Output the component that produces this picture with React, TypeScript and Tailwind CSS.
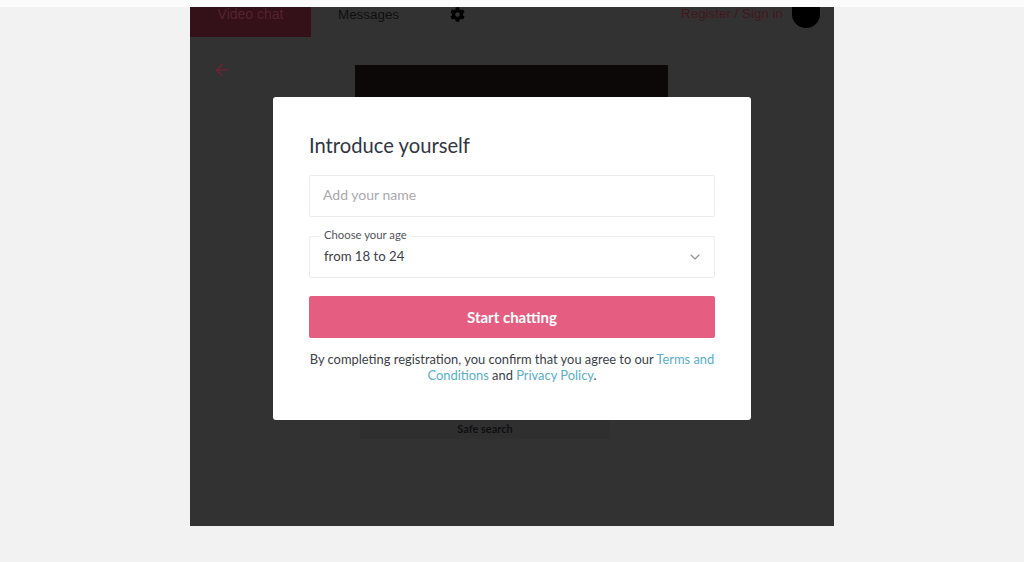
import React from 'react';
import { ArrowLeft, ChevronDown } from 'lucide-react';
import { FaCog } from 'react-icons/fa';

const App: React.FC = () => {
  return (
    <div className="w-[1024px] h-[562px] overflow-hidden flex flex-col bg-[#f2f2f2] font-['Lato','Liberation_Sans',sans-serif]">
      <div className="h-[7px] bg-[#fbfbfb] shrink-0" />

      <div className="flex-1 flex justify-center">
        {/* Dimmed page behind the dialog */}
        <div className="relative w-[644px] h-[519px] bg-[#323232] flex flex-col">
          <header className="h-[30px] flex items-start text-[13.4px] font-['Liberation_Sans',sans-serif]">
            <div className="w-[121px] h-[30px] bg-[#341018] text-[#55242d] text-[14px] flex justify-center leading-[14px]">
              Video chat
            </div>
            <div className="ml-[27px] text-[#0f0f10] leading-[15px]">Messages</div>
            <FaCog className="ml-[51px] w-[15px] h-[15px] text-black" />
            <div className="ml-auto text-[#45161f] leading-[14px]">Register / Sign in</div>
            <div className="ml-[9px] mr-[14px] w-[28px] h-[21px] bg-black rounded-b-[14px]" />
          </header>

          <div className="flex items-start pt-[28px]">
            <ArrowLeft className="-mt-[4px] ml-[23px] w-[18px] h-[18px] text-[#6b2433]" strokeWidth={2} />
            <div className="ml-[124px] w-[313px] h-[120px] bg-[#0b0807]" />
          </div>

          <div className="mt-auto mb-[87px] ml-[170px] w-[250px] h-[20px] bg-[#2f2f30] flex items-center justify-center text-[11px] font-bold text-[#0f0f10]">
            Safe search
          </div>

          {/* Dialog */}
          <div className="absolute left-[83px] top-[90px] w-[478px] h-[323px] bg-white rounded-[3px] px-[36px] pt-[33px]">
            <h2 className="text-[20.2px] leading-[30px] text-[#303642]">Introduce yourself</h2>

            <div className="mt-[15px] h-[42px] border border-[#ececf0] rounded-[2px] flex items-center px-[13px] pb-[3px] text-[14px] text-[#a9a9ae]">
              Add your name
            </div>

            <div className="relative mt-[19px] h-[42px] border border-[#ececf0] rounded-[2px] flex items-center justify-between pl-[14px] pr-[11px] text-[13.2px] text-[#3c4049]">
              <span className="absolute left-[10px] top-[-9px] bg-white px-[4px] text-[11.3px] leading-[14px] text-[#50545c]">
                Choose your age
              </span>
              <span>from 18 to 24</span>
              <ChevronDown className="w-[16px] h-[16px] text-[#8f9298]" strokeWidth={1.75} />
            </div>

            <button className="mt-[18px] w-full h-[42px] bg-[#e55d80] rounded-[2px] text-white text-[15px] font-bold">
              Start chatting
            </button>

            <p className="mt-[13px] text-center text-[12.9px] leading-[16px] text-[#3b3f48]">
              By completing registration, you confirm that you agree to our{' '}
              <span className="text-[#58aec9]">Terms and</span>{' '}
              <span className="text-[#58aec9]">Conditions</span> and{' '}
              <span className="text-[#58aec9]">Privacy Policy</span>.
            </p>
          </div>
        </div>
      </div>

      <div className="h-[36px] shrink-0" />
    </div>
  );
};

export default App;
